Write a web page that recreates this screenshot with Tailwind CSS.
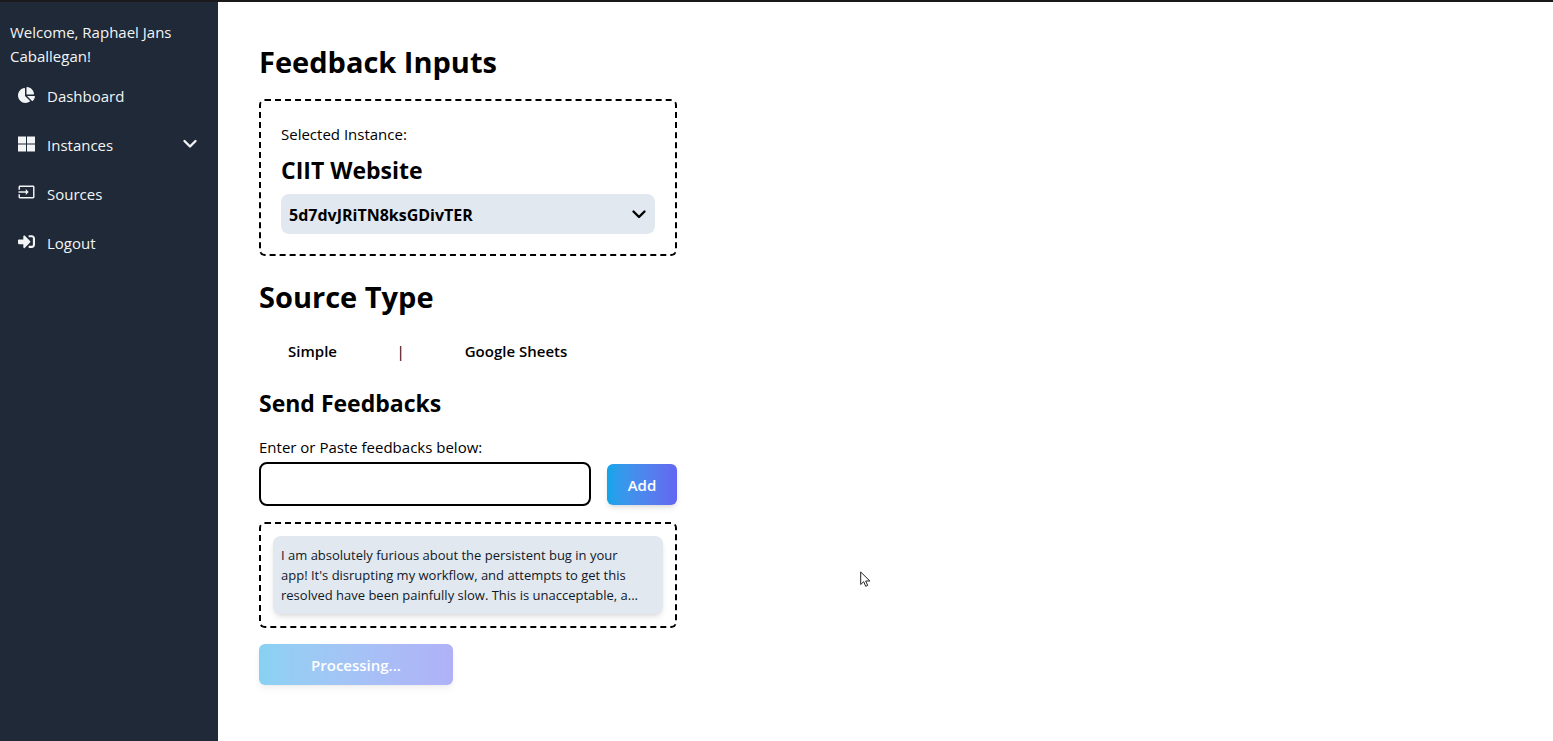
<!DOCTYPE html>
<html lang="en">
<head>
<meta charset="utf-8">
<meta name="viewport" content="width=device-width, initial-scale=1">
<title>Feedback Inputs</title>
<script src="https://cdn.jsdelivr.net/npm/@tailwindcss/browser@4"></script>
</head>
<body class="flex min-h-screen flex-col border-t-2 border-[#1a1a1c] bg-white font-['Open_Sans',sans-serif] text-[15px] text-black">
<div class="flex flex-1">
  <aside class="w-[218px] shrink-0 bg-[#1f2937] pt-[18px] text-gray-100">
    <p class="px-2.5 leading-6">Welcome, Raphael Jans Caballegan!</p>
    <nav class="mt-2 flex flex-col gap-[9px]" aria-label="Main">
      <a href="#" class="flex h-10 items-center gap-3 px-[18px]">
        <svg class="mb-0.5 h-4 w-[17px] shrink-0" viewBox="0 0 544 512" fill="currentColor" aria-hidden="true"><path d="M527.79 288H290.5l158.03 158.03c6.04 6.04 15.98 6.53 22.19.68 38.7-36.46 65.32-85.61 73.13-140.86 1.34-9.46-6.51-17.85-16.06-17.85zm-15.83-64.8C503.72 103.74 408.26 8.28 288.8.04 279.68-.59 272 7.1 272 16.24V240h223.77c9.14 0 16.82-7.68 16.19-16.8zM224 288V50.71c0-9.55-8.39-17.4-17.84-16.06C86.99 51.49-4.1 155.6.14 280.37 4.5 408.51 114.83 513.59 243.03 511.98c50.4-.63 96.97-16.87 135.26-44.03 7.9-5.6 8.42-17.23 1.57-24.08L224 288z"/></svg>
        <span>Dashboard</span>
      </a>
      <button type="button" class="flex h-10 items-center gap-3 pr-5 pl-[18px] text-left">
        <svg class="mb-0.5 h-4 w-[17px] shrink-0" viewBox="0 0 17 16" fill="currentColor" aria-hidden="true"><path d="M0 0.500h8v7H0zM9 0.500h8v7H9zM0 8.500h8v7H0zM9 8.500h8v7H9z"/></svg>
        <span class="flex-1">Instances</span>
        <svg class="mb-0.5 h-4 w-4 shrink-0" viewBox="0 0 16 16" fill="none" stroke="currentColor" stroke-width="2.4" stroke-linecap="round" stroke-linejoin="round" aria-hidden="true"><path d="M2.500 5 8 10.500l5.500-5.500"/></svg>
      </button>
      <a href="#" class="flex h-10 items-center gap-3 px-[18px]">
        <svg class="mb-1 h-4 w-[17px] shrink-0" viewBox="1 1 22 22" fill="currentColor" aria-hidden="true"><path d="M21 3.010H3c-1.100 0-2 .9-2 2V9h2V4.990h18v14.030H3V15H1v4.010c0 1.100.9 1.980 2 1.980h18c1.100 0 2-.88 2-1.980v-14c0-1.110-.9-2-2-2zM11 16l4-4-4-4v3H1v2h10v3z"/></svg>
        <span>Sources</span>
      </a>
      <a href="#" class="flex h-10 items-center gap-3 px-[18px]">
        <svg class="mb-1 h-[17px] w-[17px] shrink-0" viewBox="0 0 512 512" fill="currentColor" aria-hidden="true"><path d="M416 448h-84c-6.600 0-12-5.400-12-12v-40c0-6.600 5.400-12 12-12h84c17.700 0 32-14.300 32-32V160c0-17.700-14.300-32-32-32h-84c-6.600 0-12-5.400-12-12V76c0-6.600 5.400-12 12-12h84c53 0 96 43 96 96v192c0 53-43 96-96 96zm-47-201L201 79c-15-15-41-4.500-41 17v96H24c-13.300 0-24 10.700-24 24v96c0 13.300 10.700 24 24 24h136v96c0 21.500 26 32 41 17l168-168c9.300-9.400 9.300-24.600 0-34z"/></svg>
        <span>Logout</span>
      </a>
    </nav>
  </aside>

  <main class="flex-1 px-[41px] py-10">
    <div class="w-full max-w-[418px]">
      <h1 class="text-[29px] leading-10 font-bold">Feedback Inputs</h1>
      <section class="mt-[17px] rounded-md border-2 border-dashed border-black p-5">
        <label for="instance" class="block leading-[26px]">Selected Instance:</label>
        <h2 class="text-[23px] leading-[47px] font-bold">CIIT Website</h2>
        <div class="relative">
          <select id="instance" class="h-10 w-full appearance-none rounded-lg bg-slate-200 pt-0.5 pr-9 pl-2 text-base font-bold">
            <option>5d7dvJRiTN8ksGDivTER</option>
          </select>
          <svg class="pointer-events-none absolute top-3 right-2 h-4 w-4" viewBox="0 0 16 16" fill="none" stroke="currentColor" stroke-width="2.4" stroke-linecap="round" stroke-linejoin="round" aria-hidden="true"><path d="M2.500 5.500 8 11l5.500-5.500"/></svg>
        </div>
      </section>

      <h1 class="mt-[21px] text-[29px] leading-10 font-bold">Source Type</h1>
      <div class="mt-3.5 flex h-10 items-center font-semibold">
        <button type="button" class="w-[107px] text-center">Simple</button>
        <span class="w-[69px] text-center font-normal">|</span>
        <button type="button" class="w-[162px] text-center">Google Sheets</button>
      </div>

      <h2 class="mt-4 text-[23px] leading-8 font-bold">Send Feedbacks</h2>
      <form onsubmit="return false">
        <label for="feedback" class="mt-4 block leading-6">Enter or Paste feedbacks below:</label>
        <div class="mt-[3px] flex items-center gap-4">
          <input id="feedback" type="text" class="h-11 min-w-0 flex-1 rounded-lg border-2 border-black px-2">
          <button type="submit" class="h-[41px] w-[70px] rounded-md bg-linear-to-r from-[#0ea5e9] to-[#6366f1] pt-0.5 font-semibold text-white shadow-md">Add</button>
        </div>
        <div class="mt-4 rounded-md border-2 border-dashed border-black p-3">
          <p class="rounded-lg bg-slate-200 px-2 py-[9px] text-[13px] leading-5 whitespace-pre-line text-gray-900 shadow-md">I am absolutely furious about the persistent bug in your
app! It's disrupting my workflow, and attempts to get this
resolved have been painfully slow. This is unacceptable, a...</p>
        </div>
        <button type="submit" disabled class="mt-4 h-[41px] w-[194px] rounded-md bg-linear-to-r from-[#0ea5e9] to-[#6366f1] pt-0.5 font-semibold text-white opacity-50 shadow-md">Processing...</button>
      </form>
    </div>
  </main>
</div>
<svg class="pointer-events-none absolute top-[571px] left-[860px] h-[17px] w-[11px]" viewBox="0 0 11 17" aria-hidden="true"><path d="M.7 1v12.500l3-2.800 2 4.600 2-.9-2-4.400h4.200z" fill="#fff" stroke="#222" stroke-width="1"/></svg>
</body>
</html>
